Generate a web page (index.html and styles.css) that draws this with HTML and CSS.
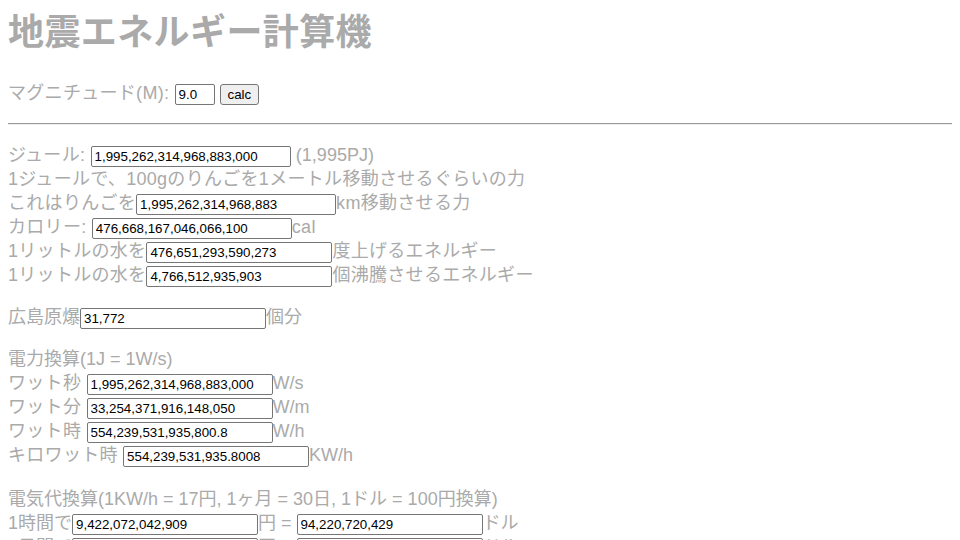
FILE: index.html
```html
<!DOCTYPE html>
<html lang="ja">
<head>
    <meta charset="UTF-8">
    <title>地震エネルギー計算機</title>
    <link rel="stylesheet" href="styles.css">
</head>
<body>

    <h1>地震エネルギー計算機</h1>

    <p>マグニチュード(M): <input class="mag" type="text" value="9.0"> <button class="btn">calc</button></p>

    <hr>

    <p>
        ジュール: <input class="num wide" type="text" value="1,995,262,314,968,883,000"> <span class="plain">(1,995PJ)</span><br>
        1ジュールで、100gのりんごを1メートル移動させるぐらいの力<br>
        これはりんごを<input class="num wide" type="text" value="1,995,262,314,968,883">km移動させる力<br>
        カロリー: <input class="num wide" type="text" value="476,668,167,046,066,100">cal<br>
        1リットルの水を<input class="num" type="text" value="476,651,293,590,273">度上げるエネルギー<br>
        1リットルの水を<input class="num" type="text" value="4,766,512,935,903">個沸騰させるエネルギー
    </p>

    <p class="plain">広島原爆<input class="num" type="text" value="31,772">個分</p>

    <p>
        <span class="plain">電力換算(1J = 1W/s)</span><br>
        ワット秒 <input class="num" type="text" value="1,995,262,314,968,883,000"><span class="plain">W/s</span><br>
        ワット分 <input class="num" type="text" value="33,254,371,916,148,050"><span class="plain">W/m</span><br>
        ワット時 <input class="num" type="text" value="554,239,531,935,800.8"><span class="plain">W/h</span><br>
        キロワット時 <input class="num" type="text" value="554,239,531,935.8008"><span class="plain">KW/h</span>
    </p>

    <p class="plain cost">
        電気代換算(1KW/h = 17円, 1ヶ月 = 30日, 1ドル = 100円換算)<br>
        1時間で<input class="num" type="text" value="9,422,072,042,909">円 = <input class="num" type="text" value="94,220,720,429">ドル<br>
        1日間で<input class="num" type="text" value="226,129,729,029,806">円 = <input class="num" type="text" value="2,261,297,290,298">ドル<br>
        1ヶ月間で<input class="num" type="text" value="6,783,891,870,894,192">円 = <input class="num" type="text" value="67,838,918,708,942">ドル
    </p>

</body>
</html>
```

FILE: styles.css
```css
body {
    font-family: "Liberation Sans", "Noto Sans CJK JP", sans-serif;
    font-size: 18px;
    line-height: 24px;
    letter-spacing: 0.3px;
    color: #aaa;
    margin: 8px;
}
h1 {
    font-size: 36px;
    line-height: 49px;
    letter-spacing: 0.4px;
    margin: 0 0 24px;
}
p {
    margin: 18px 0;
}
.plain {
    letter-spacing: 0;
}
.cost {
    margin-top: 20px;
}
hr {
    margin: 0;
    border: none;
    border-top: 1px solid #9a9a9a;
    border-bottom: 1px solid #eee;
}
input {
    box-sizing: border-box;
    height: 21px;
    padding: 1px 3px;
    border: 1px solid #767676;
    border-radius: 2px;
    font-family: "Liberation Sans", sans-serif;
    font-size: 13.33px;
    letter-spacing: normal;
    color: #000;
    margin: 0;
}
.mag {
    width: 40px;
}
.num {
    width: 186px;
}
.num.wide {
    width: 200px;
}
.btn {
    box-sizing: border-box;
    width: 39px;
    height: 21px;
    padding: 1px 6px;
    background: #efefef;
    border: 1px solid #767676;
    border-radius: 3px;
    font-family: "Liberation Sans", sans-serif;
    font-size: 13.33px;
    letter-spacing: normal;
    color: #000;
    margin: 0;
}
```
